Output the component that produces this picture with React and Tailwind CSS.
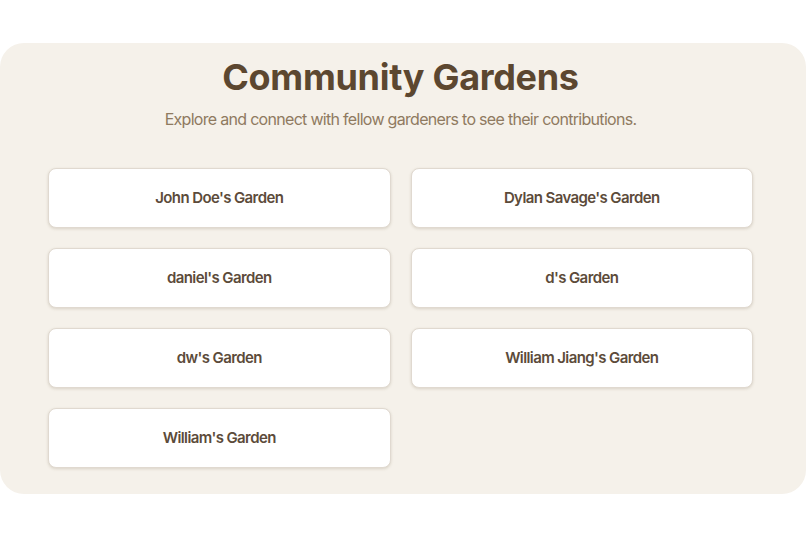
import React from 'react';

const gardens = [
  "John Doe's Garden",
  "Dylan Savage's Garden",
  "daniel's Garden",
  "d's Garden",
  "dw's Garden",
  "William Jiang's Garden",
  "William's Garden",
];

const App = () => {
  return (
    <div className="min-h-screen bg-white pt-[43px] font-['Inter',sans-serif]">
      <div className="bg-[#f5f1ea] rounded-[24px] pl-[48px] pr-[53px] pt-[10px] pb-[26px]">
        <h1 className="text-center text-[36px] leading-[48px] font-bold text-[#5c4730] tracking-[-0.3px]">
          Community Gardens
        </h1>
        <p className="text-center text-[16px] leading-6 text-[#8f7a60] mt-[6px] tracking-[-0.7px]">
          Explore and connect with fellow gardeners to see their contributions.
        </p>
        <div className="grid grid-cols-2 gap-x-[20px] gap-y-5 mt-[37px]">
          {gardens.map((g) => (
            <div
              key={g}
              className="h-[60px] bg-white border border-[#e0d9d0] rounded-lg shadow-[0_1px_3px_rgba(90,70,40,0.18)] flex items-center justify-center"
            >
              <span className="text-[15px] font-semibold text-[#5c4b3a] tracking-[-0.6px]">{g}</span>
            </div>
          ))}
        </div>
      </div>
    </div>
  );
};

export default App;
